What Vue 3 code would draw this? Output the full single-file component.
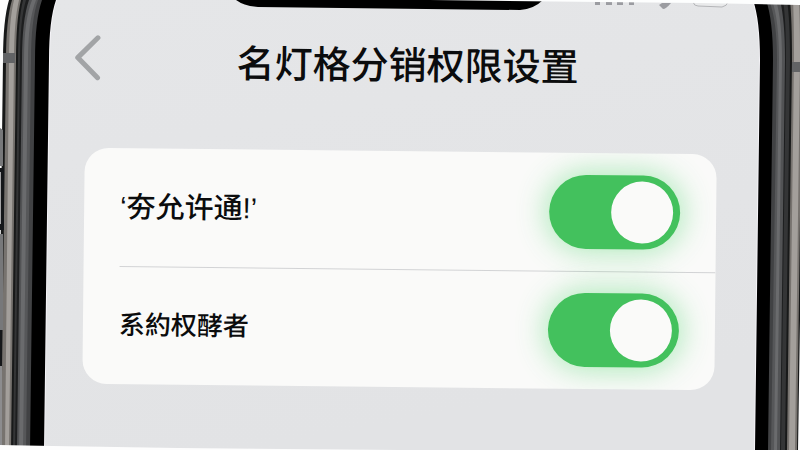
<script setup>
import { ref } from 'vue'

const rows = ref([
  { id: 'allow', label: '‘夯允许通!’', on: true },
  { id: 'role', label: '系約权酵者', on: true, compact: true },
])

// Casing layers from the outer rim to the display: left and right edge at
// the top, below the corner and at the foot.
const layers = [
  { fill: '#171818', l: [9, 3, -2], r: [808, 804, 798] },
  { fill: '#77736f', l: [12, 6, 1], r: [803, 802, 797] },
  { fill: '#a39f9b', l: [14, 9, 5], r: [799, 800, 795] },
  { fill: '#77736f', l: [19, 14, 9], r: [793, 794, 789] },
  { fill: '#181919', l: [21, 16, 11], r: [790, 792, 787] },
  { fill: '#343536', l: [23, 18, 13], r: [787, 790, 785] },
  { fill: '#1d1e1f', l: [26, 20, 15], r: [783, 786, 781] },
  { fill: '#525355', l: [29, 22, 17], r: [780, 785, 780] },
  { fill: '#6a6b6d', l: [32, 24, 19], r: [776, 782, 777] },
  { fill: '#565759', l: [36, 28, 23], r: [772, 779, 774] },
  { fill: '#414244', l: [38, 31, 26], r: [769, 777, 771] },
  { fill: '#000000', l: [42, 35, 30], r: [766, 773, 768] },
  { fill: '#f5f4f8', l: [56, 49, 44], r: [753, 760, 755] },
  { fill: 'url(#display)', l: [57, 50, 45], r: [752, 759, 754] },
]

const outline = ({ l, r }) =>
  `M${l[0]} 0Q${l[1]} 20 ${l[1]} 60L${l[2]} 450H${r[2]}L${r[1]} 60Q${r[1]} 20 ${r[0]} 0Z`
</script>

<template>
  <div class="stage">
    <svg class="casing" viewBox="0 0 800 450" preserveAspectRatio="none" aria-hidden="true">
      <defs>
        <linearGradient id="display" x1="0" y1="0" x2="0.3" y2="1">
          <stop offset="0" stop-color="#e5e6e8" />
          <stop offset="1" stop-color="#e2e3e5" />
        </linearGradient>
      </defs>
      <path v-for="(layer, i) in layers" :key="i" :d="outline(layer)" :fill="layer.fill" />
      <path d="M0 128L3 130V166H0Z" fill="#77787a" />
      <path d="M0 168H4V230H0Z" fill="#15171a" />
      <path d="M0 172H1V224H0Z" fill="#a5a5a7" />
      <path d="M0 234H3V330H0Z" fill="#77787a" />
      <path d="M0 330H2V366H0Z" fill="#15171a" />
      <path d="M0 366H2V446H0Z" fill="#8c8c8e" />
      <path d="M3 53H15V63H3ZM792 62H800V72H792Z" fill="#626365" />
      <path d="M236 0Q244 6 258 7L520 10Q534 9 543 0Z" fill="#000" />
      <g fill="#9b9ca1">
        <path d="M595 2H600V5H595ZM606 2H612V5H606ZM617 2H623V5H617ZM629 2H634V5H629Z" />
        <path d="M659 5L663 9Q666 9 671 3H662Z" />
      </g>
      <path d="M693 0V2Q694 6 698 6L722 7Q727 6 728 2V0" fill="#e9eaeb" stroke="#b4b5b8" />
      <path d="M430 0H800V5L700 3L600 2Z" fill="#fdfefe" />
      <path d="M0 445L53 446L116 447L178 448L400 450H0Z" fill="#fdfdfd" />
    </svg>

    <main class="screen">
      <header class="bar">
        <button class="back" type="button" aria-label="返回">
          <svg viewBox="0 0 28 46" aria-hidden="true">
            <path d="M24 3L4 23L24 43" />
          </svg>
        </button>
        <h1>名灯格分销权限设置</h1>
      </header>

      <section class="card">
        <div v-for="row in rows" :key="row.id" class="row">
          <label :for="row.id" :class="{ compact: row.compact }">{{ row.label }}</label>
          <input :id="row.id" v-model="row.on" class="switch" type="checkbox" role="switch" />
        </div>
      </section>
    </main>
  </div>
</template>

<style>
body {
  margin: 0;
  background: #fdfdfd;
}
</style>

<style scoped>
.stage {
  position: relative;
  min-height: 100vh;
  overflow: hidden;
  font-family: 'Liberation Sans', 'Noto Sans CJK SC', sans-serif;
  color: #0b0c0d;
}

.casing {
  position: absolute;
  inset: 0;
  width: 100%;
  height: 100%;
}

.screen {
  position: relative;
  box-sizing: border-box;
  min-height: 100vh;
  padding: 38px 84px 0;
  transform: rotate(0.6deg);
}

.bar {
  display: grid;
  grid-template-columns: 28px 1fr 16px;
  align-items: start;
  margin: 0 -12px;
  height: 113px;
}

.back {
  display: block;
  width: 28px;
  height: 46px;
  padding: 0;
  border: 0;
  background: none;
  cursor: pointer;
}

.back svg {
  display: block;
  width: 28px;
  height: 46px;
  fill: none;
  stroke: #a2a4a6;
  stroke-width: 5;
  stroke-linecap: round;
  stroke-linejoin: round;
}

h1 {
  margin: 0;
  font-size: 38px;
  line-height: 56px;
  font-weight: 500;
  text-align: center;
  white-space: nowrap;
}

.card {
  border-radius: 24px;
  background: #fafaf9;
  overflow: hidden;
}

.row {
  display: flex;
  align-items: center;
  justify-content: space-between;
  height: 118px;
  padding: 0 36px;
}

.row + .row {
  background: linear-gradient(#d2d3d5, #d2d3d5) 36px 0 / 100% 1px no-repeat;
}

label {
  font-size: 29px;
  line-height: 40px;
  font-weight: 500;
  white-space: nowrap;
}

label.compact {
  font-size: 26px;
}

.switch {
  appearance: none;
  display: flex;
  align-items: center;
  justify-content: flex-start;
  box-sizing: border-box;
  width: 131px;
  height: 74px;
  margin: 0;
  padding: 0 7px;
  border-radius: 37px;
  background: #d5d6d8;
  cursor: pointer;
}

.switch::before {
  content: '';
  width: 62px;
  height: 62px;
  border-radius: 50%;
  background: #fafaf9;
}

.switch:checked {
  justify-content: flex-end;
  background: #43c15d;
  box-shadow: 0 0 30px 2px rgba(67, 210, 98, 0.45);
}
</style>
